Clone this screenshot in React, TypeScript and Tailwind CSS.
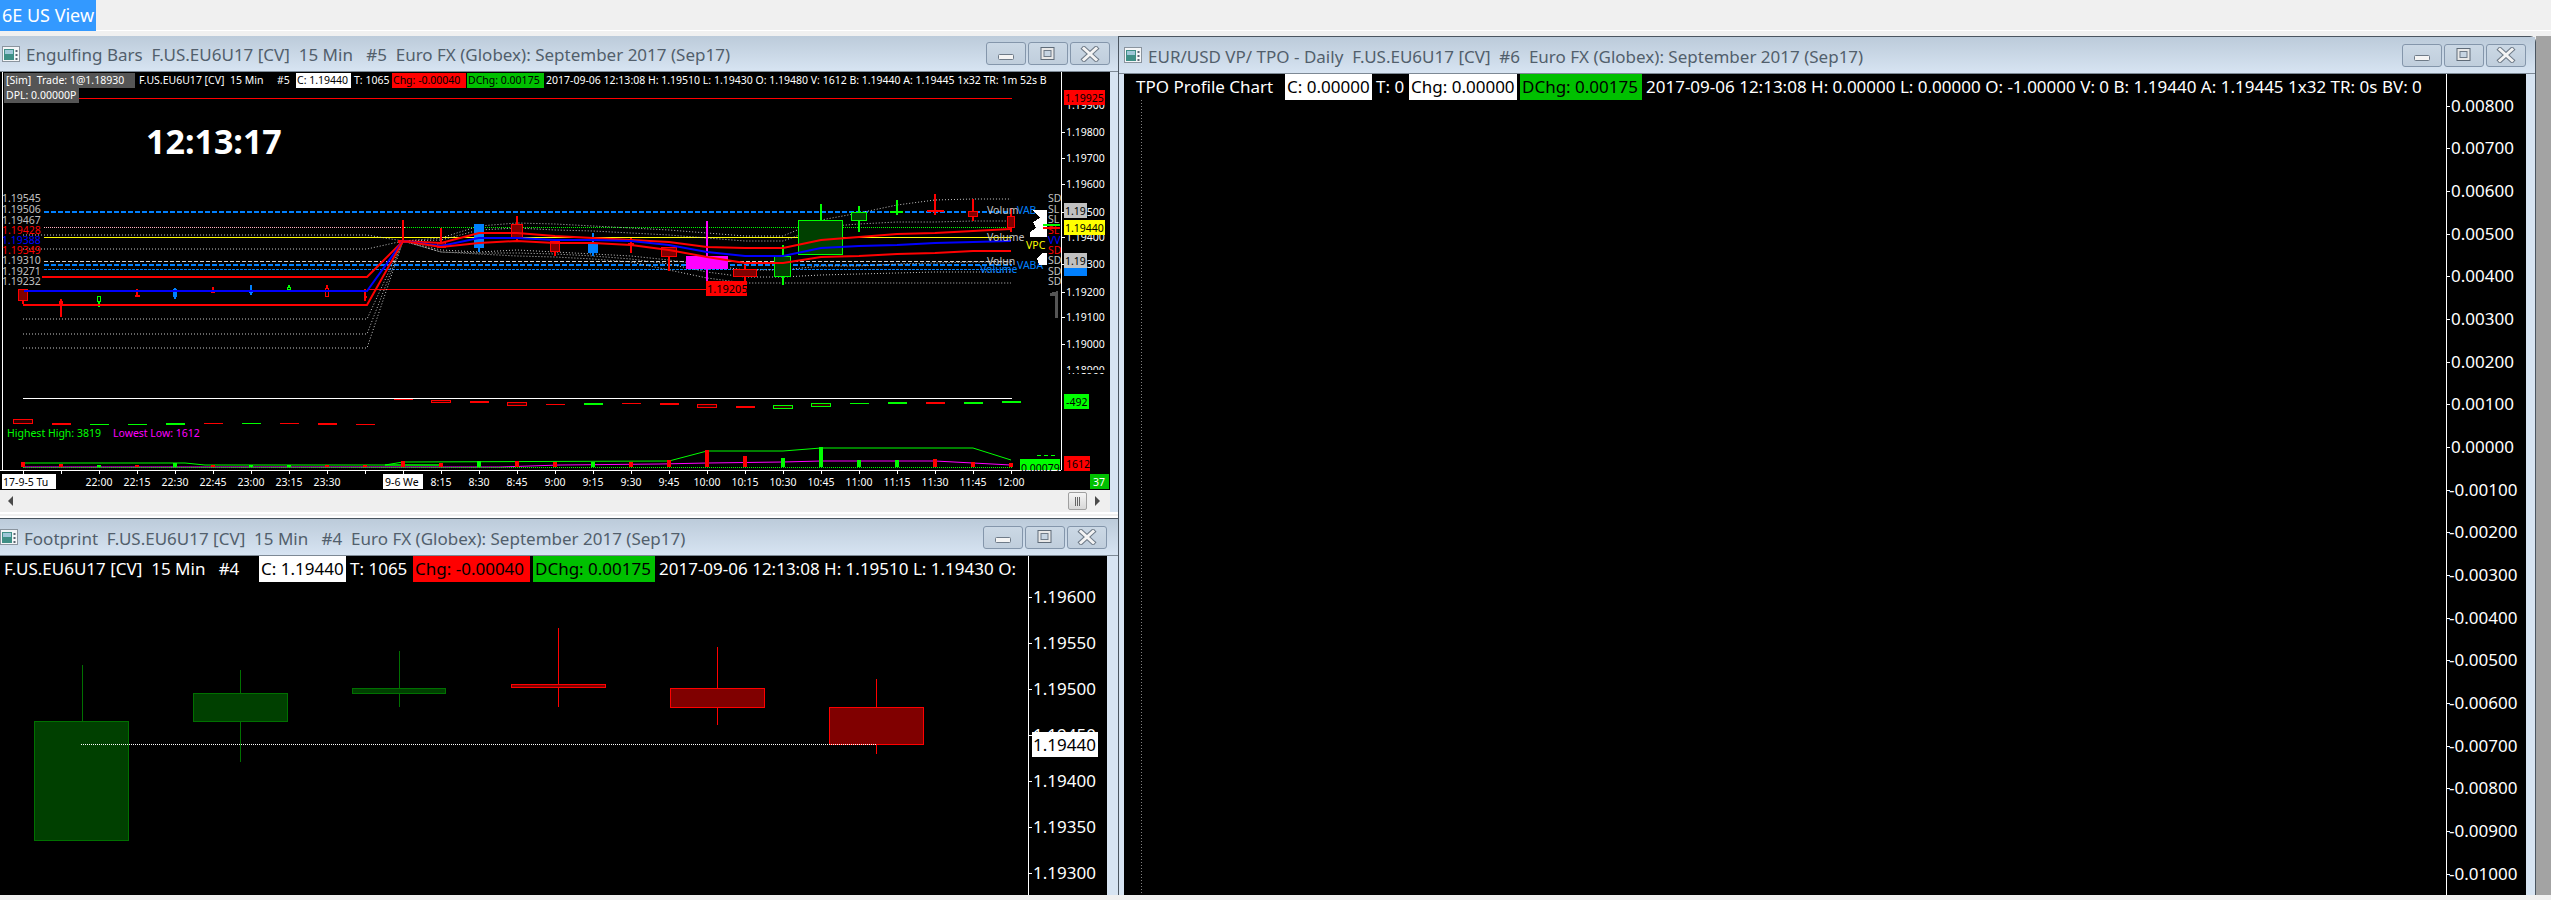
import React from 'react';

const XS = [23, 61, 99, 137, 175, 213, 251, 289, 327, 365, 403, 441, 479, 517, 555, 593, 631, 669, 707, 745, 783, 821, 859, 897, 935, 973, 1011];
const TIMES: [number, string][] = [
  [99, '22:00'], [137, '22:15'], [175, '22:30'], [213, '22:45'], [251, '23:00'], [289, '23:15'], [327, '23:30'],
  [441, '8:15'], [479, '8:30'], [517, '8:45'], [555, '9:00'], [593, '9:15'], [631, '9:30'], [669, '9:45'], [707, '10:00'],
  [745, '10:15'], [783, '10:30'], [821, '10:45'], [859, '11:00'], [897, '11:15'], [935, '11:30'], [973, '11:45'], [1011, '12:00'],
];

const RED = '#ff0000';
const GREEN = '#00ff00';
const BLUE = '#0080ff';

// x, wick top, wick bottom, body left, body right, body top, body bottom, line colour, fill
type Candle = [number, number, number, number, number, number, number, string, string];
const PRICE_BARS: Candle[] = [
  [23, 290, 304, 18, 28, 289, 301, RED, '#800000'],
  [61, 299, 317, 59, 63, 301, 304, RED, RED],
  [99, 296, 307, 97, 101, 296, 302, GREEN, '#000000'],
  [137, 289, 297, 135, 140, 295, 297, RED, RED],
  [175, 288, 299, 173, 177, 289, 297, BLUE, BLUE],
  [213, 287, 293, 211, 215, 291, 293, RED, RED],
  [251, 285, 295, 249, 253, 291, 293, BLUE, BLUE],
  [289, 285, 290, 287, 291, 287, 290, GREEN, '#000000'],
  [327, 285, 297, 325, 329, 288, 297, RED, '#000000'],
  [365, 289, 301, 364, 367, 296, 298, RED, RED],
  [403, 220, 243, 398, 409, 240, 243, RED, RED],
  [441, 228, 248, 437, 446, 242, 248, RED, '#800000'],
  [479, 224, 252, 474, 484, 224, 248, BLUE, BLUE],
  [517, 216, 240, 511, 523, 224, 238, RED, '#800000'],
  [555, 241, 256, 550, 560, 241, 252, RED, '#800000'],
  [593, 233, 256, 588, 598, 243, 253, BLUE, BLUE],
  [631, 238, 253, 628, 634, 243, 245, RED, RED],
  [669, 247, 271, 661, 677, 247, 257, RED, '#800000'],
  [707, 221, 281, 686, 728, 256, 269, '#ff00ff', '#ff00ff'],
  [745, 265, 281, 733, 757, 269, 277, RED, '#800000'],
  [783, 245, 285, 774, 791, 256, 277, GREEN, '#004000'],
  [821, 204, 220, 798, 843, 220, 255, GREEN, '#004000'],
  [859, 206, 232, 851, 867, 212, 221, GREEN, '#004000'],
  [897, 200, 215, 890, 903, 211, 212, GREEN, GREEN],
  [935, 194, 215, 927, 944, 210, 211, RED, RED],
  [973, 199, 221, 968, 978, 211, 217, RED, '#800000'],
  [1011, 208, 232, 1007, 1015, 216, 228, RED, '#800000'],
];

// delta strip: y, height, colour, filled
const DELTA: [number, number, string, boolean][] = [
  [419, 4, RED, false], [423, 2, RED, true], [424, 1, GREEN, true], [424, 1, GREEN, true], [423, 2, GREEN, true],
  [423, 1, RED, true], [423, 1, GREEN, true], [423, 1, RED, true], [423, 2, RED, true], [424, 1, RED, true],
  [399, 1, RED, true], [400, 2, RED, false], [401, 2, RED, true], [402, 3, RED, false], [404, 1, RED, true],
  [403, 2, GREEN, true], [403, 1, RED, true], [403, 2, RED, true], [404, 3, RED, false], [406, 2, RED, true],
  [405, 3, GREEN, false], [403, 3, GREEN, false], [403, 1, GREEN, true], [402, 2, GREEN, true], [402, 2, RED, true],
  [402, 2, GREEN, true], [401, 2, GREEN, true],
];

const VOLUME: [number, string][] = [
  [462, RED], [464, RED], [465, GREEN], [465, RED], [463, GREEN], [465, RED], [465, GREEN], [465, GREEN], [465, RED], [465, RED],
  [461, RED], [463, RED], [461, GREEN], [461, RED], [462, RED], [462, GREEN], [462, RED], [460, RED], [450, RED], [456, RED],
  [458, GREEN], [447, GREEN], [460, GREEN], [460, GREEN], [459, RED], [462, RED], [463, RED],
];

const pts = (ys: number[]) => XS.slice(9).map((x, i) => `${x + (i === 0 ? 2 : 0)},${ys[i]}`).join(' ');
const RED_UP = [277, 241, 243, 233, 233, 236, 238, 240, 242, 247, 248, 248, 240, 237, 234, 233, 231, 229];
const BLUE_MID = [291, 241, 246, 238, 238, 240, 240, 241, 245, 252, 256, 256, 248, 246, 245, 243, 242, 241];
const RED_LOW = [305, 241, 247, 243, 241, 243, 243, 245, 250, 257, 263, 263, 257, 256, 254, 253, 251, 251];
const DOT_TOP = [235, 241, 238, 226, 223, 224, 226, 228, 230, 233, 236, 236, 220, 213, 205, 200, 199, 199];
const DOT_2 = [249, 241, 240, 230, 228, 230, 231, 233, 235, 238, 241, 241, 227, 224, 222, 222, 221, 221];
const DOT_3 = [319, 241, 250, 252, 250, 252, 254, 256, 260, 265, 270, 270, 266, 266, 264, 263, 262, 262];
const DOT_4 = [334, 241, 252, 253, 253, 254, 256, 259, 264, 272, 277, 277, 275, 274, 273, 272, 272, 272];
const DOT_5 = [348, 241, 252, 254, 256, 257, 259, 262, 270, 278, 283, 283, 283, 283, 283, 283, 283, 283];

const LEFT_LABELS: [number, string, string][] = [
  [198, '1.19545', '#c0c0c0'], [209, '1.19506', '#c0c0c0'], [220, '1.19467', '#c0c0c0'], [230, '1.19428', RED],
  [240, '1.19388', '#0000ff'], [250, '1.19349', RED], [260, '1.19310', '#c0c0c0'], [271, '1.19271', '#c0c0c0'], [281, '1.19232', '#c0c0c0'],
];
const SD_LABELS: [number, string, string][] = [
  [198, 'SD', '#c0c0c0'], [209, 'SL', '#c0c0c0'], [219, 'SL', '#c0c0c0'], [230, 'SL', RED], [240, 'VV', '#0000ff'],
  [250, 'SD', RED], [260, 'SD', '#c0c0c0'], [271, 'SD', '#c0c0c0'], [281, 'SD', '#c0c0c0'],
];

const Icon = () => (
  <svg width="18" height="16" viewBox="0 0 18 16" className="shrink-0">
    <rect x="0.5" y="0.5" width="17" height="15" fill="#f4f6f8" stroke="#8a949e" />
    <rect x="2" y="3" width="10" height="11" fill="#3f8f86" />
    <rect x="3" y="4" width="8" height="4" fill="#9fc7d8" />
    <rect x="13.5" y="4" width="2" height="2" fill="#5a6672" />
    <rect x="13.5" y="8" width="2" height="2" fill="#5a6672" />
    <rect x="13.5" y="12" width="2" height="2" fill="#5a6672" />
  </svg>
);

const CaptionButton = ({ kind }: { kind: 'min' | 'max' | 'close' }) => (
  <div className="flex h-[23px] w-[40px] items-center justify-center rounded-[3px] border border-[#8496ab] bg-gradient-to-b from-[#cbd8e5] to-[#c0cedc]">
    <svg width="20" height="16" viewBox="0 0 20 16">
      {kind === 'min' && <rect x="2.5" y="8.5" width="15" height="5" rx="1" fill="#f4f4f4" stroke="#6f7b88" />}
      {kind === 'max' && (
        <g>
          <rect x="3" y="1.5" width="13" height="12" fill="#e8e8e8" stroke="#5f6b78" />
          <rect x="6" y="4.5" width="7" height="6" fill="#c6d4e2" stroke="#6f7b88" />
        </g>
      )}
      {kind === 'close' && (
        <g fill="none" strokeLinecap="square">
          <path d="M4 2.5 L16 13.5 M16 2.5 L4 13.5" stroke="#6f7b88" strokeWidth="5" />
          <path d="M4 2.5 L16 13.5 M16 2.5 L4 13.5" stroke="#f4f4f4" strokeWidth="3" />
        </g>
      )}
    </svg>
  </div>
);

const TitleBar = ({ title, className }: { title: string; className: string }) => (
  <div className={`flex items-center border-b border-[#7d8995] bg-gradient-to-b from-[#bccbda] to-[#d7e4f2] whitespace-pre text-[#525f6c] ${className}`}>
    <Icon />
    <span className="ml-[6px] flex-1 pt-[2px] text-[17px] leading-none">{title}</span>
    <div className="flex gap-[2px]">
      <CaptionButton kind="min" />
      <CaptionButton kind="max" />
      <CaptionButton kind="close" />
    </div>
  </div>
);

const Cell = ({ className, children }: { className?: string; children: React.ReactNode }) => (
  <div className={`shrink-0 overflow-hidden whitespace-pre ${className ?? ''}`}>{children}</div>
);

const EngulfingChart = () => (
  <svg width="1110" height="418" viewBox="0 72 1110 418" className="absolute inset-0" shapeRendering="crispEdges" fontSize="10.5">
    <rect x="2" y="72" width="1" height="398" fill="#fff" />
    <rect x="0" y="470" width="1061" height="1" fill="#fff" />
    <rect x="1061" y="72" width="1" height="398" fill="#fff" />
    <rect x="4" y="98" width="1008" height="1" fill={RED} />

    <line x1="44" x2="1012" y1="211.5" y2="211.5" stroke={BLUE} strokeWidth="2" strokeDasharray="5 2" />
    <line x1="44" x2="1012" y1="265" y2="265" stroke={BLUE} strokeWidth="2" strokeDasharray="5 2" />
    <line x1="44" x2="1012" y1="269.5" y2="269.5" stroke={BLUE} strokeDasharray="3 1" />
    <line x1="44" x2="1012" y1="261.5" y2="261.5" stroke="#d0d0d0" strokeDasharray="4 2" />
    <line x1="44" x2="405" y1="227.5" y2="227.5" stroke="#ffb0c0" strokeDasharray="1 1" />
    <line x1="405" x2="1012" y1="227.5" y2="227.5" stroke={GREEN} strokeDasharray="1 1" />
    <line x1="44" x2="1012" y1="237.5" y2="237.5" stroke="#ffff00" />
    <line x1="368" x2="402" y1="289.5" y2="289.5" stroke={RED} />
    <line x1="368" x2="706" y1="289.5" y2="289.5" stroke={RED} />

    <g fill="none" stroke="#c8c8c8" strokeDasharray="1 2" shapeRendering="auto">
      {[DOT_TOP, DOT_2, DOT_3, DOT_4, DOT_5].map((ys, i) => (
        <polyline key={i} points={`23,${ys[0]} ${pts(ys)}`} />
      ))}
    </g>

    {PRICE_BARS.map(([x, wt, wb, bl, br, bt, bb, line, fill], i) => (
      <g key={i}>
        <rect x={x - 1} y={wt} width="2" height={wb - wt} fill={line} />
        <rect x={bl + 0.5} y={bt + 0.5} width={br - bl - 1} height={Math.max(bb - bt - 1, 1)} fill={fill} stroke={line} />
      </g>
    ))}

    <g fill="none" strokeWidth="2" shapeRendering="auto">
      <polyline points={`42,${RED_UP[0]} ${pts(RED_UP)}`} stroke={RED} />
      <polyline points={`24,${BLUE_MID[0]} ${pts(BLUE_MID)}`} stroke="#0000ff" />
      <polyline points={`23,${RED_LOW[0]} ${pts(RED_LOW)}`} stroke={RED} />
    </g>

    <rect x="706" y="281" width="41" height="15" fill={RED} />
    <text x="707" y="293" fill="#000" fontSize="11">1.19205</text>

    {LEFT_LABELS.map(([y, t, c]) => (
      <text key={y} x="2" y={y + 4} fill={c}>{t}</text>
    ))}

    <text x="987" y="214" fill="#c0c0c0">Volum</text>
    <text x="1017" y="214" fill={BLUE}>VAB.</text>
    <text x="987" y="241" fill="#c0c0c0">Volume</text>
    <text x="1026" y="249" fill="#ffff00">VPC</text>
    <text x="987" y="265" fill="#c0c0c0">Volun</text>
    <text x="980" y="273" fill={BLUE}>Volume</text>
    <text x="1017" y="269" fill={BLUE}>VABA</text>
    <polygon points="1032,210 1047,210 1047,237 1030,237 1030,232 1036,228 1033,222 1040,218" fill="#fff" />
    <polygon points="1037,258 1042,253 1047,253 1047,265 1039,265" fill="#fff" />
    <polygon points="1050,293 1058,291 1058,318 1055,318 1055,296 1050,296" fill="#555" />
    {SD_LABELS.map(([y, t, c]) => (
      <text key={y} x="1048" y={y + 4} fill={c}>{t}</text>
    ))}
    <rect x="1043" y="224" width="17" height="2" fill={GREEN} />
    <rect x="1043" y="227" width="17" height="2" fill={RED} />

    {/* price axis */}
    {[132, 158, 184, 212, 237, 264, 292, 317, 344, 370].map((y, i) => (
      <g key={y}>
        <rect x="1062" y={y} width="3" height="1" fill="#fff" />
        <text x="1066" y={y + 4} fill="#fff">{`1.${19800 - i * 100}`}</text>
      </g>
    ))}
    <rect x="1062" y="370" width="48" height="3" fill="#000" />
    <text x="1066" y="109" fill="#fff">1.19900</text>
    <rect x="1064" y="90" width="41" height="15" fill={RED} />
    <text x="1065" y="102" fill="#000">1.19925</text>
    <rect x="1064" y="203" width="23" height="15" fill="#c0c0c0" />
    <text x="1065" y="215" fill="#000">1.19</text>
    <rect x="1064" y="220" width="41" height="15" fill="#ffff00" />
    <text x="1065" y="232" fill="#000">1.19440</text>
    <rect x="1064" y="268" width="23" height="8" fill={BLUE} />
    <rect x="1064" y="253" width="23" height="15" fill="#c0c0c0" />
    <text x="1065" y="265" fill="#000">1.19</text>

    {/* delta strip */}
    <rect x="23" y="398" width="989" height="1" fill="#fff" />
    {DELTA.map(([y, h, c, solid], i) => (
      <rect key={i} x={XS[i] - 9.5} y={y} width="19" height={h} fill={solid ? c : '#300'} stroke={solid ? 'none' : c} />
    ))}
    <text x="7" y="437" fill={GREEN} fontSize="10.5">Highest High: 3819</text>
    <text x="113" y="437" fill="#ff00ff" fontSize="10.5">Lowest Low: 1612</text>
    <rect x="1064" y="394" width="25" height="15" fill={GREEN} />
    <text x="1066" y="406" fill="#000">-492</text>

    {/* volume strip */}
    <polyline points="23,463 185,463 205,465 440,465 385,465 403,462 669,461 707,451 783,451 821,448 973,448 1011,460" fill="none" stroke={GREEN} shapeRendering="auto" />
    <polyline points="23,467 500,467 560,465 660,464 707,463 783,462 821,461 935,461 973,463 1011,465" fill="none" stroke="#ff00ff" shapeRendering="auto" />
    <line x1="23" x2="1012" y1="467.5" y2="467.5" stroke={GREEN} strokeDasharray="1 1" />
    {VOLUME.map(([y, c], i) => (
      <rect key={i} x={XS[i] - 2} y={y} width="4" height={467 - y} fill={c} />
    ))}
    <rect x="1020" y="459" width="40" height="11" fill={GREEN} />
    <text x="1021" y="472" fill="#000">0.00079</text>
    <line x1="1037" x2="1058" y1="455.5" y2="455.5" stroke={GREEN} strokeDasharray="4 3" />
    <rect x="1064" y="456" width="26" height="15" fill={RED} />
    <text x="1066" y="468" fill="#000">1612</text>
    <rect x="1090" y="474" width="19" height="15" fill="#00c000" />
    <text x="1093" y="486" fill="#fff">37</text>

    {/* time axis */}
    {XS.map((x) => (
      <rect key={x} x={x} y="471" width="1" height="3" fill="#fff" />
    ))}
    <rect x="2" y="474" width="54" height="15" fill="#fff" />
    <text x="3" y="486" fill="#000">17-9-5 Tu</text>
    <rect x="383" y="474" width="40" height="15" fill="#fff" />
    <text x="385" y="486" fill="#000">9-6 We</text>
    {TIMES.map(([x, t]) => (
      <text key={x} x={x} y="486" fill="#fff" textAnchor="middle">{t}</text>
    ))}
  </svg>
);

const FootprintChart = () => {
  const candles: Candle[] = [
    [82, 665, 721, 34, 129, 721, 841, '#007000', '#004000'],
    [240, 670, 762, 193, 288, 693, 722, '#007000', '#004000'],
    [399, 651, 707, 352, 446, 688, 694, '#007000', '#004000'],
    [558, 628, 707, 511, 606, 684, 688, RED, '#800000'],
    [717, 647, 725, 670, 765, 688, 708, RED, '#800000'],
    [876, 679, 754, 829, 924, 707, 745, RED, '#800000'],
  ];
  return (
    <svg width="1107" height="339" viewBox="0 556 1107 339" className="absolute inset-0" shapeRendering="crispEdges" fontSize="17">
      {candles.map(([x, wt, wb, bl, br, bt, bb, line, fill]) => (
        <g key={x}>
          <rect x={x} y={wt} width="1" height={wb - wt} fill={line} />
          <rect x={bl + 0.5} y={bt + 0.5} width={br - bl - 1} height={bb - bt - 1} fill={fill} stroke={line} />
        </g>
      ))}
      <line x1="81" x2="876" y1="744.5" y2="744.5" stroke="#fff" strokeDasharray="1 1" />
      <rect x="1028" y="556" width="1" height="339" fill="#fff" />
      {[597, 643, 689, 735, 781, 827, 873].map((y, i) => (
        <g key={y}>
          <rect x="1029" y={y} width="3" height="1" fill="#fff" />
          <text x="1033" y={y + 6} fill="#fff">{`1.${19600 - i * 50}`}</text>
        </g>
      ))}
      <rect x="1032" y="732" width="66" height="25" fill="#fff" />
      <text x="1033" y="751" fill="#000">1.19440</text>
    </svg>
  );
};

const TpoChart = () => {
  const labels = Array.from({ length: 19 }, (_, i) => {
    const v = (8 - i) / 1000;
    return v < 0 ? `-${Math.abs(v).toFixed(5)}` : Math.abs(v).toFixed(5);
  });
  return (
    <svg width="1402" height="821" viewBox="1125 74 1402 821" className="absolute inset-0" shapeRendering="crispEdges" fontSize="17">
      <line x1="1142.5" x2="1142.5" y1="100" y2="895" stroke="#808080" strokeDasharray="1 2" />
      <rect x="2447" y="74" width="1" height="821" fill="#fff" />
      {labels.map((t, i) => {
        const y = 105.7 + i * 42.67;
        return (
          <g key={t}>
            <rect x="2448" y={Math.round(y)} width="3" height="1" fill="#fff" />
            <text x={t[0] === '-' ? 2450 : 2452} y={y + 6} fill="#fff">{t}</text>
          </g>
        );
      })}
    </svg>
  );
};

export default function App() {
  return (
    <div className="flex h-[900px] w-[2551px] flex-col overflow-hidden bg-[#f0f0f0] font-['Noto_Sans',sans-serif]">
      <div className="h-[31px] shrink-0 border-b border-white">
        <div className="flex h-[31px] w-[96px] items-center justify-center bg-[#3399ff] text-[18px] text-white">6E US View</div>
      </div>

      <div className="mt-[5px] flex h-[859px] shrink-0">
        {/* left column */}
        <div className="flex w-[1118px] shrink-0 flex-col bg-[#d7e4f2]">
          <TitleBar title="Engulfing Bars  F.US.EU6U17 [CV]  15 Min   #5  Euro FX (Globex): September 2017 (Sep17)" className="h-[36px] pl-[2px] pr-[8px]" />
          <div className="relative h-[418px] w-[1110px] shrink-0 overflow-hidden bg-black">
            <EngulfingChart />
            <div className="absolute left-[4px] top-[1px] text-[10.5px] leading-[15px] text-white">
              <div className="flex w-[1057px] overflow-hidden">
                <Cell className="w-[131px] bg-[#555555] pl-[2px]">[Sim]  Trade: 1@1.18930</Cell>
                <Cell className="w-[142px] pl-[4px]">F.US.EU6U17 [CV]  15 Min</Cell>
                <Cell className="w-[19px]">#5</Cell>
                <Cell className="w-[55px] bg-white pl-[1px] text-black">C: 1.19440</Cell>
                <Cell className="w-[41px] pl-[3px]">T: 1065</Cell>
                <Cell className="w-[74px] bg-[#ff0000] pl-[1px] text-black">Chg: -0.00040</Cell>
                <Cell className="ml-[1px] w-[77px] bg-[#00c000] pl-[1px] text-black">DChg: 0.00175</Cell>
                <Cell className="pl-[2px]">2017-09-06 12:13:08 H: 1.19510 L: 1.19430 O: 1.19480 V: 1612 B: 1.19440 A: 1.19445 1x32 TR: 1m 52s B</Cell>
              </div>
              <div className="w-[75px] bg-[#555555] pl-[2px]">DPL: 0.00000P</div>
            </div>
            <div className="absolute left-[146px] top-[49px] text-[34px] font-bold leading-[40px] text-white">12:13:17</div>
          </div>
          <div className="flex h-[22px] w-[1110px] shrink-0 items-center bg-[#efefef]">
            <span className="ml-[8px] h-0 w-0 border-y-[5px] border-r-[5px] border-y-transparent border-r-[#4a4a4a]" />
            <span className="ml-auto flex h-[18px] w-[19px] items-center justify-center gap-[1px] rounded-[2px] border border-[#a0a0a0] bg-gradient-to-b from-[#f5f5f5] to-[#d8d8d8]">
              <i className="h-[9px] w-[1px] bg-[#666]" />
              <i className="h-[9px] w-[1px] bg-[#666]" />
              <i className="h-[9px] w-[1px] bg-[#666]" />
            </span>
            <span className="ml-[8px] mr-[10px] h-0 w-0 border-y-[5px] border-l-[5px] border-y-transparent border-l-[#4a4a4a]" />
          </div>
          <div className="h-[6px] shrink-0 border-y-2 border-white bg-[#f0f0f0]" />

          <TitleBar title="Footprint  F.US.EU6U17 [CV]  15 Min   #4  Euro FX (Globex): September 2017 (Sep17)" className="h-[38px] border-t border-t-[#4a5560] pr-[11px]" />
          <div className="relative h-[339px] w-[1107px] shrink-0 overflow-hidden bg-black">
            <FootprintChart />
            <div className="absolute left-0 top-0 flex h-[26px] w-[1028px] overflow-hidden text-[17px] leading-[26px] text-white">
              <Cell className="w-[259px] pl-[4px]">F.US.EU6U17 [CV]  15 Min   #4</Cell>
              <Cell className="w-[87px] bg-white pl-[2px] text-black">C: 1.19440</Cell>
              <Cell className="w-[67px] pl-[4px]">T: 1065</Cell>
              <Cell className="w-[117px] bg-[#ff0000] pl-[2px] text-black">Chg: -0.00040</Cell>
              <Cell className="ml-[3px] w-[122px] bg-[#00c000] pl-[2px] text-black">DChg: 0.00175</Cell>
              <Cell className="pl-[4px]">2017-09-06 12:13:08 H: 1.19510 L: 1.19430 O:</Cell>
            </div>
          </div>
        </div>

        {/* right window */}
        <div className="flex w-[1418px] shrink-0 flex-col rounded-tr-[6px] border-l border-t border-r border-[#4a5560] bg-[#d7e4f2]">
          <TitleBar title="EUR/USD VP/ TPO - Daily  F.US.EU6U17 [CV]  #6  Euro FX (Globex): September 2017 (Sep17)" className="h-[37px] pl-[5px] pr-[9px]" />
          <div className="relative ml-[5px] h-[821px] w-[1402px] overflow-hidden bg-black">
            <TpoChart />
            <div className="absolute left-0 top-0 flex h-[26px] w-[1322px] overflow-hidden text-[17px] leading-[26px] text-white">
              <Cell className="w-[161px] pl-[12px]">TPO Profile Chart</Cell>
              <Cell className="w-[87px] bg-white pl-[2px] text-black">C: 0.00000</Cell>
              <Cell className="w-[37px] pl-[4px]">T: 0</Cell>
              <Cell className="w-[108px] bg-white pl-[2px] text-black">Chg: 0.00000</Cell>
              <Cell className="ml-[3px] w-[122px] bg-[#00c000] pl-[2px] text-black">DChg: 0.00175</Cell>
              <Cell className="pl-[4px]">2017-09-06 12:13:08 H: 0.00000 L: 0.00000 O: -1.00000 V: 0 B: 1.19440 A: 1.19445 1x32 TR: 0s BV: 0</Cell>
            </div>
          </div>
        </div>
        <div className="flex-1 bg-[#a3a3a3]" />
      </div>
    </div>
  );
}
